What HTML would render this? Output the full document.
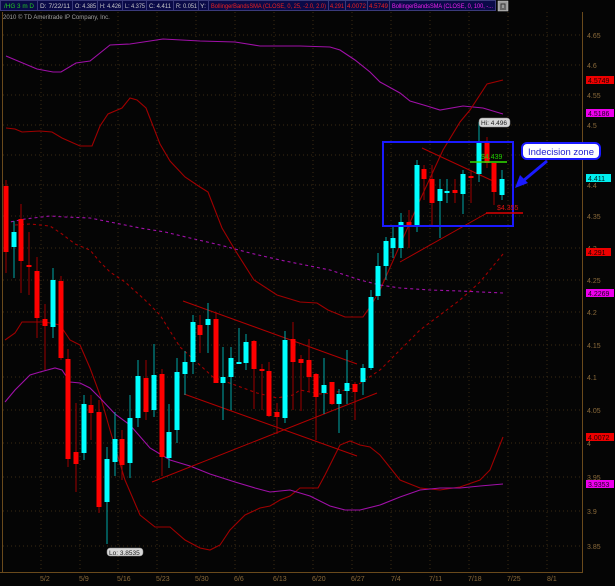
<!DOCTYPE html>
<html><head><meta charset="utf-8"><style>
html,body{margin:0;padding:0;background:#050505;width:615px;height:586px;overflow:hidden}
svg{display:block}
text{font-family:"Liberation Sans",sans-serif}
</style></head><body>
<svg width="615" height="586" viewBox="0 0 615 586" xmlns="http://www.w3.org/2000/svg">
<rect width="615" height="586" fill="#050505"/>
<g stroke="#3a2c14" stroke-width="1" stroke-dasharray="1,3">
<line x1="3" y1="35" x2="582" y2="35"/><line x1="3" y1="65" x2="582" y2="65"/><line x1="3" y1="95" x2="582" y2="95"/><line x1="3" y1="125" x2="582" y2="125"/><line x1="3" y1="155" x2="582" y2="155"/><line x1="3" y1="185" x2="582" y2="185"/><line x1="3" y1="216" x2="582" y2="216"/><line x1="3" y1="248" x2="582" y2="248"/><line x1="3" y1="280" x2="582" y2="280"/><line x1="3" y1="312" x2="582" y2="312"/><line x1="3" y1="345" x2="582" y2="345"/><line x1="3" y1="377" x2="582" y2="377"/><line x1="3" y1="410" x2="582" y2="410"/><line x1="3" y1="443" x2="582" y2="443"/><line x1="3" y1="477" x2="582" y2="477"/><line x1="3" y1="511" x2="582" y2="511"/><line x1="3" y1="546" x2="582" y2="546"/>
<line x1="41" y1="12" x2="41" y2="572"/><line x1="80" y1="12" x2="80" y2="572"/><line x1="118" y1="12" x2="118" y2="572"/><line x1="157" y1="12" x2="157" y2="572"/><line x1="196" y1="12" x2="196" y2="572"/><line x1="235" y1="12" x2="235" y2="572"/><line x1="274" y1="12" x2="274" y2="572"/><line x1="313" y1="12" x2="313" y2="572"/><line x1="352" y1="12" x2="352" y2="572"/><line x1="391" y1="12" x2="391" y2="572"/><line x1="430" y1="12" x2="430" y2="572"/><line x1="469" y1="12" x2="469" y2="572"/><line x1="508" y1="12" x2="508" y2="572"/><line x1="547" y1="12" x2="547" y2="572"/>
</g>
<g stroke="#6a4a1c" stroke-width="1">
<line x1="2.5" y1="12" x2="2.5" y2="572"/><line x1="582.5" y1="12" x2="582.5" y2="572"/><line x1="0" y1="572.5" x2="583" y2="572.5"/>
</g>
<g fill="#8a6a3a" font-size="7">
<text x="587" y="38">4.65</text><text x="587" y="68">4.6</text><text x="587" y="98">4.55</text><text x="587" y="128">4.5</text><text x="587" y="158">4.45</text><text x="587" y="188">4.4</text><text x="587" y="219">4.35</text><text x="587" y="251">4.3</text><text x="587" y="283">4.25</text><text x="587" y="315">4.2</text><text x="587" y="348">4.15</text><text x="587" y="380">4.1</text><text x="587" y="413">4.05</text><text x="587" y="446">4</text><text x="587" y="480">3.95</text><text x="587" y="514">3.9</text><text x="587" y="549">3.85</text>
<text x="40" y="581">5/2</text><text x="79" y="581">5/9</text><text x="117" y="581">5/16</text><text x="156" y="581">5/23</text><text x="195" y="581">5/30</text><text x="234" y="581">6/6</text><text x="273" y="581">6/13</text><text x="312" y="581">6/20</text><text x="351" y="581">6/27</text><text x="391" y="581">7/4</text><text x="429" y="581">7/11</text><text x="468" y="581">7/18</text><text x="507" y="581">7/25</text><text x="547" y="581">8/1</text>
</g>
<g fill="none" stroke-width="1.1">
<polyline stroke="#a010a8" points="6,56 37,69 53,72 61,72 76,63 90,61 110,45 130,44 150,41 163,39 200,41 235,42 260,46 300,46 330,47 340,50 355,60 370,72 380,82 400,93 410,101 427,106 440,110 463,106 483,108 503,114"/>
<polyline stroke="#a00000" points="6,128 15,129 22,132 40,131 52,132 62,138 80,146 92,146 100,126 108,114 122,108 130,98 137,100 146,108 160,144 170,161 185,177 200,187 208,192 222,228 235,250 254,280 277,295 300,302 317,303 328,310 345,317 363,317 370,307 380,290 400,245 420,200 443,150 460,122 470,110 487,84 503,80"/>
<polyline stroke="#a00000" points="5,340 15,333 22,322 45,322 60,325 70,340 80,345 90,368 100,395 110,430 125,480 140,515 155,527 170,527 185,540 200,548 210,550 220,545 230,530 245,515 260,508 270,506 280,500 290,496 300,488 318,488 325,475 335,455 340,445 350,441 360,445 370,447 380,455 400,480 420,488 440,490 460,487 480,480 490,470 503,437"/>
<polyline stroke="#a010a8" points="5,402 15,390 30,375 40,372 55,368 62,370 70,382 80,383 90,388 100,398 115,414 130,425 150,448 170,460 190,466 210,474 235,482 255,488 270,492 290,490 310,496 330,506 345,510 360,510 380,505 400,497 420,490 440,488 460,488 480,486 503,484"/>
<polyline stroke="#a00000" stroke-dasharray="3,3" points="15,225 30,224 50,226 62,234 75,244 90,250 100,262 110,272 125,282 145,300 160,315 180,347 213,377 257,393 277,398 293,395 300,390 320,394 333,393 353,388 380,370 420,330 460,300 480,282 503,254"/>
<polyline stroke="#a010a8" stroke-dasharray="3,3" points="5,223 25,219 50,216 65,217 90,218 110,222 140,228 165,232 190,238 220,245 250,253 280,260 300,264 330,270 360,280 380,285 400,288 430,290 460,291 503,293"/>
</g>
<g stroke="#b00000" stroke-width="1">
<line x1="183" y1="301" x2="357" y2="364"/><line x1="184" y1="394" x2="357" y2="456"/><line x1="152" y1="482" x2="377" y2="393"/>
<line x1="422" y1="148" x2="493" y2="181"/><line x1="400" y1="262" x2="487" y2="213"/>
</g>
<g>
<g stroke="#a00000" stroke-width="1">
<line x1="6" y1="180" x2="6" y2="273"/><line x1="21" y1="204" x2="21" y2="293"/><line x1="29" y1="232" x2="29" y2="295"/><line x1="37" y1="257" x2="37" y2="338"/><line x1="45" y1="304" x2="45" y2="370"/><line x1="61" y1="276" x2="61" y2="360"/><line x1="68" y1="349" x2="68" y2="467"/><line x1="76" y1="403" x2="76" y2="492"/><line x1="91" y1="395" x2="91" y2="440"/><line x1="99" y1="400" x2="99" y2="513"/><line x1="122" y1="430" x2="122" y2="480"/><line x1="146" y1="360" x2="146" y2="420"/><line x1="162" y1="369" x2="162" y2="476"/><line x1="200" y1="315" x2="200" y2="353"/><line x1="216" y1="312" x2="216" y2="383"/><line x1="254" y1="340" x2="254" y2="409"/><line x1="262" y1="364" x2="262" y2="410"/><line x1="269" y1="362" x2="269" y2="417"/><line x1="277" y1="403" x2="277" y2="434"/><line x1="293" y1="322" x2="293" y2="410"/><line x1="301" y1="355" x2="301" y2="411"/><line x1="309" y1="339" x2="309" y2="392"/><line x1="316" y1="373" x2="316" y2="440"/><line x1="332" y1="382" x2="332" y2="405"/><line x1="355" y1="382" x2="355" y2="420"/><line x1="409" y1="210" x2="409" y2="248"/><line x1="424" y1="165" x2="424" y2="200"/><line x1="432" y1="165" x2="432" y2="225"/><line x1="455" y1="179" x2="455" y2="203"/><line x1="471" y1="170" x2="471" y2="203"/><line x1="487" y1="137" x2="487" y2="168"/><line x1="494" y1="163" x2="494" y2="205"/>
</g>
<g stroke="#00a8a8" stroke-width="1">
<line x1="14" y1="221" x2="14" y2="278"/><line x1="53" y1="268" x2="53" y2="338"/><line x1="84" y1="395" x2="84" y2="460"/><line x1="107" y1="447" x2="107" y2="544"/><line x1="115" y1="412" x2="115" y2="476"/><line x1="130" y1="395" x2="130" y2="478"/><line x1="138" y1="360" x2="138" y2="427"/><line x1="154" y1="344" x2="154" y2="417"/><line x1="169" y1="404" x2="169" y2="468"/><line x1="177" y1="358" x2="177" y2="443"/><line x1="185" y1="351" x2="185" y2="395"/><line x1="193" y1="315" x2="193" y2="374"/><line x1="208" y1="303" x2="208" y2="353"/><line x1="223" y1="347" x2="223" y2="420"/><line x1="231" y1="347" x2="231" y2="410"/><line x1="239" y1="328" x2="239" y2="363"/><line x1="246" y1="334" x2="246" y2="370"/><line x1="285" y1="331" x2="285" y2="423"/><line x1="324" y1="358" x2="324" y2="414"/><line x1="339" y1="389" x2="339" y2="433"/><line x1="347" y1="350" x2="347" y2="404"/><line x1="363" y1="364" x2="363" y2="395"/><line x1="371" y1="290" x2="371" y2="370"/><line x1="378" y1="253" x2="378" y2="300"/><line x1="386" y1="237" x2="386" y2="280"/><line x1="393" y1="227" x2="393" y2="258"/><line x1="401" y1="213" x2="401" y2="258"/><line x1="417" y1="160" x2="417" y2="232"/><line x1="440" y1="179" x2="440" y2="238"/><line x1="447" y1="179" x2="447" y2="203"/><line x1="463" y1="170" x2="463" y2="214"/><line x1="479" y1="122" x2="479" y2="182"/><line x1="502" y1="170" x2="502" y2="200"/>
</g>
<g fill="#ff0000">
<rect x="3.5" y="186" width="5" height="66"/><rect x="18.5" y="219" width="5" height="42"/><rect x="26.5" y="265" width="5" height="2"/><rect x="34.5" y="271" width="5" height="47"/><rect x="42.5" y="319" width="5" height="7"/><rect x="58.5" y="281" width="5" height="77"/><rect x="65.5" y="359" width="5" height="100"/><rect x="73.5" y="452" width="5" height="12"/><rect x="88.5" y="405" width="5" height="8"/><rect x="96.5" y="412" width="5" height="95"/><rect x="119.5" y="439" width="5" height="26"/><rect x="143.5" y="378" width="5" height="34"/><rect x="159.5" y="374" width="5" height="83"/><rect x="197.5" y="325" width="5" height="10"/><rect x="213.5" y="319" width="5" height="64"/><rect x="251.5" y="341" width="5" height="28"/><rect x="259.5" y="369" width="5" height="2"/><rect x="266.5" y="371" width="5" height="45"/><rect x="274.5" y="412" width="5" height="5"/><rect x="290.5" y="339" width="5" height="23"/><rect x="298.5" y="359" width="5" height="4"/><rect x="306.5" y="360" width="5" height="17"/><rect x="313.5" y="374" width="5" height="23"/><rect x="329.5" y="382" width="5" height="22"/><rect x="352.5" y="384" width="5" height="8"/><rect x="406.5" y="222" width="5" height="4"/><rect x="421.5" y="169" width="5" height="10"/><rect x="429.5" y="179" width="5" height="24"/><rect x="452.5" y="190" width="5" height="3"/><rect x="468.5" y="176" width="5" height="2"/><rect x="484.5" y="143" width="5" height="20"/><rect x="491.5" y="163" width="5" height="29"/>
</g>
<g fill="#00ffff">
<rect x="11.5" y="232" width="5" height="15"/><rect x="50.5" y="280" width="5" height="47"/><rect x="81.5" y="404" width="5" height="49"/><rect x="104.5" y="459" width="5" height="43"/><rect x="112.5" y="439" width="5" height="23"/><rect x="127.5" y="418" width="5" height="45"/><rect x="135.5" y="376" width="5" height="42"/><rect x="151.5" y="375" width="5" height="35"/><rect x="166.5" y="432" width="5" height="26"/><rect x="174.5" y="372" width="5" height="58"/><rect x="182.5" y="362" width="5" height="12"/><rect x="190.5" y="322" width="5" height="40"/><rect x="205.5" y="319" width="5" height="6"/><rect x="220.5" y="377" width="5" height="6"/><rect x="228.5" y="358" width="5" height="19"/><rect x="236.5" y="362" width="5" height="2"/><rect x="243.5" y="342" width="5" height="21"/><rect x="282.5" y="340" width="5" height="78"/><rect x="321.5" y="385" width="5" height="8"/><rect x="336.5" y="394" width="5" height="10"/><rect x="344.5" y="383" width="5" height="8"/><rect x="360.5" y="368" width="5" height="14"/><rect x="368.5" y="297" width="5" height="71"/><rect x="375.5" y="266" width="5" height="30"/><rect x="383.5" y="241" width="5" height="25"/><rect x="390.5" y="238" width="5" height="10"/><rect x="398.5" y="222" width="5" height="26"/><rect x="414.5" y="165" width="5" height="60"/><rect x="437.5" y="189" width="5" height="12"/><rect x="444.5" y="191" width="5" height="2"/><rect x="460.5" y="174" width="5" height="20"/><rect x="476.5" y="143" width="5" height="31"/><rect x="499.5" y="179" width="5" height="16"/>
</g>
</g>
<rect x="383" y="142" width="130" height="84" fill="none" stroke="#1a1aff" stroke-width="2"/>
<line x1="470" y1="162" x2="507" y2="162" stroke="#33dd00" stroke-width="1.5"/>
<text x="481" y="159" fill="#22cc00" font-size="7">$4.439</text>
<line x1="486" y1="213" x2="523" y2="213" stroke="#dd0000" stroke-width="1.5"/>
<text x="497" y="210" fill="#dd1010" font-size="7">$4.355</text>
<rect x="479" y="118" width="31" height="9" rx="3" fill="#d8d8d8" stroke="#888" stroke-width="0.5"/>
<text x="481" y="125" fill="#222" font-size="6.5">Hi: 4.496</text>
<rect x="107" y="548" width="36" height="8" rx="3" fill="#d8d8d8" stroke="#888" stroke-width="0.5"/>
<text x="109" y="555" fill="#222" font-size="6.5">Lo: 3.8535</text>
<rect x="522" y="143" width="78" height="16" rx="5" fill="#fff" stroke="#1a1aff" stroke-width="2"/>
<text x="561" y="155" fill="#2020d0" font-size="9.5" text-anchor="middle">Indecision zone</text>
<line x1="547" y1="161" x2="523" y2="181" stroke="#1a1aff" stroke-width="3"/>
<polygon points="515,188 520,175 528,183" fill="#1a1aff"/>
<g font-size="7">
<rect x="586" y="76" width="28" height="8" fill="#ee0000"/><text x="588" y="83" fill="#220000">4.5749</text>
<rect x="586" y="109" width="28" height="8" fill="#ee00ee"/><text x="588" y="116" fill="#200020">4.5186</text>
<rect x="586" y="174" width="25" height="8" fill="#00eeee"/><text x="588" y="181" fill="#002020">4.411</text>
<rect x="586" y="248" width="25" height="8" fill="#ee0000"/><text x="588" y="255" fill="#220000">4.291</text>
<rect x="586" y="289" width="28" height="8" fill="#ee00ee"/><text x="588" y="296" fill="#200020">4.2269</text>
<rect x="586" y="433" width="28" height="8" fill="#ee0000"/><text x="588" y="440" fill="#220000">4.0072</text>
<rect x="586" y="480" width="28" height="8" fill="#ee00ee"/><text x="588" y="487" fill="#200020">3.9353</text>
</g>
<rect x="0" y="0" width="496" height="11" fill="#0a0a48"/>
<g stroke="#3a3a7a" stroke-width="1" fill="none">
<rect x="0.5" y="0.5" width="495" height="10"/>
<line x1="37.5" y1="0" x2="37.5" y2="11"/><line x1="72.5" y1="0" x2="72.5" y2="11"/><line x1="97.5" y1="0" x2="97.5" y2="11"/><line x1="122.5" y1="0" x2="122.5" y2="11"/><line x1="146.5" y1="0" x2="146.5" y2="11"/><line x1="173.5" y1="0" x2="173.5" y2="11"/><line x1="198.5" y1="0" x2="198.5" y2="11"/><line x1="208.5" y1="0" x2="208.5" y2="11"/><line x1="328.5" y1="0" x2="328.5" y2="11"/><line x1="345.5" y1="0" x2="345.5" y2="11"/><line x1="367.5" y1="0" x2="367.5" y2="11"/><line x1="389.5" y1="0" x2="389.5" y2="11"/>
</g>
<g font-size="6.3" fill="#c8c8c8" lengthAdjust="spacingAndGlyphs">
<text x="4" y="8" fill="#22cc22" textLength="30" lengthAdjust="spacingAndGlyphs">/HG 3 m D</text>
<text x="40" y="8" textLength="30" lengthAdjust="spacingAndGlyphs">D: 7/22/11</text>
<text x="75" y="8" textLength="21" lengthAdjust="spacingAndGlyphs">O: 4.385</text>
<text x="100" y="8" textLength="21" lengthAdjust="spacingAndGlyphs">H: 4.426</text>
<text x="125" y="8" textLength="20" lengthAdjust="spacingAndGlyphs">L: 4.375</text>
<text x="149" y="8" textLength="22" lengthAdjust="spacingAndGlyphs">C: 4.411</text>
<text x="176" y="8" textLength="21" lengthAdjust="spacingAndGlyphs">R: 0.051</text>
<text x="200" y="8" textLength="6" lengthAdjust="spacingAndGlyphs">Y:</text>
<text x="211" y="8" fill="#ee2020" textLength="115" lengthAdjust="spacingAndGlyphs">BollingerBandsSMA (CLOSE, 0, 25, -2.0, 2.0)</text>
<text x="330" y="8" fill="#ee2020" textLength="14" lengthAdjust="spacingAndGlyphs">4.291</text>
<text x="347" y="8" fill="#ee2020" textLength="19" lengthAdjust="spacingAndGlyphs">4.0072</text>
<text x="369" y="8" fill="#ee2020" textLength="19" lengthAdjust="spacingAndGlyphs">4.5749</text>
<text x="392" y="8" fill="#ee20ee" textLength="101" lengthAdjust="spacingAndGlyphs">BollingerBandsSMA (CLOSE, 0, 100, -...</text>
</g>
<rect x="498" y="1" width="10" height="10" fill="#9a9a9a" stroke="#ccc" stroke-width="0.5"/>
<path d="M500,9 h6 M501,8 v-4 h4 v4" stroke="#333" stroke-width="1" fill="none"/>
<text x="3" y="19" font-size="6" fill="#a0a0a0">2010 © TD Ameritrade IP Company, Inc.</text>
</svg>
</body></html>
